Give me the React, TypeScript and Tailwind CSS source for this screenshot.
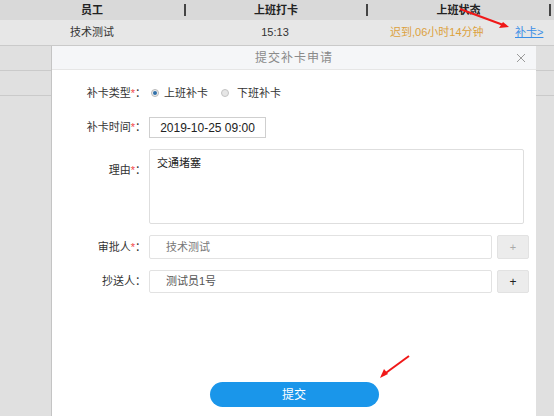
import React from 'react';

const font = { fontFamily: '"Liberation Sans", "Noto Sans CJK SC", sans-serif' };

function Label({ text, required }: { text: string; required?: boolean }) {
  return (
    <div className="w-[97px] shrink-0 pr-[3px] text-right text-[11px] text-[#333]">
      {text}
      {required && <span className="text-[#f04848]">*</span>}
      <span>：</span>
    </div>
  );
}

export default function App() {
  return (
    <div className="relative h-[416px] w-[554px] overflow-hidden bg-[#e0e0e0] text-[#333]" style={font}>
      {/* 背景の表 */}
      <div className="flex h-[20px] items-center bg-[#d9d9d9] text-[11px] font-bold text-[#222]">
        <div className="flex h-full w-[184px] items-center justify-center">员工</div>
        <div className="h-[12px] w-[2px] bg-[#444]"></div>
        <div className="flex h-full w-[180px] items-center justify-center">上班打卡</div>
        <div className="h-[12px] w-[2px] bg-[#444]"></div>
        <div className="flex h-full w-[181px] items-center justify-center">上班状态</div>
        <div className="h-[12px] w-[2px] bg-[#444]"></div>
      </div>
      <div className="flex h-[26px] items-center border-b border-[#cacaca] bg-[#e7e7e7] text-[11px]">
        <div className="w-[184px] text-center">技术测试</div>
        <div className="w-[182px] text-center">15:13</div>
        <div className="w-[24px]"></div>
        <div className="w-[125px] text-[#dca13c]">迟到,06小时14分钟</div>
        <div className="text-[#3a8ee6] underline">补卡&gt;</div>
      </div>
      <div className="h-[25px] border-b border-[#cacaca]"></div>
      <div className="h-[25px] border-b border-[#cacaca]"></div>

      {/* ダイアログ */}
      <div className="absolute left-[51px] top-[46px] flex h-[400px] w-[485px] flex-col border-l border-[#c4c4c4] bg-white">
        <div className="relative flex h-[24px] shrink-0 items-center justify-center border-b border-[#e6e6e6] bg-[#f5f6f8] text-[12px] tracking-[1px] text-[#8a8a8a]">
          提交补卡申请
          <svg className="absolute right-[10px] top-[7px]" width="10" height="10" viewBox="0 0 10 10">
            <path d="M1 1 L9 9 M9 1 L1 9" stroke="#9a9a9a" strokeWidth="1" fill="none" />
          </svg>
        </div>

        <div className="mt-[13px] flex h-[20px] items-center">
          <Label text="补卡类型" required />
          <span className="ml-[2px] flex h-[8px] w-[8px] items-center justify-center rounded-full border border-[#b8b8b8] bg-[#f0f0f0]">
            <span className="h-[4px] w-[4px] rounded-full bg-[#2f6fa8]"></span>
          </span>
          <span className="ml-[5px] text-[11px]">上班补卡</span>
          <span className="ml-[13px] h-[8px] w-[8px] rounded-full border border-[#c4c4c4] bg-[#e6e6e6]"></span>
          <span className="ml-[8px] text-[11px]">下班补卡</span>
        </div>

        <div className="mt-[14px] flex h-[21px] items-center">
          <Label text="补卡时间" required />
          <div className="flex h-[21px] w-[117px] items-center justify-center border border-[#cfcfcf] text-[12px] text-[#222]">
            2019-10-25 09:00
          </div>
        </div>

        <div className="mt-[11px] flex">
          <div className="pt-[13px]">
            <Label text="理由" required />
          </div>
          <div className="h-[75px] w-[375px] rounded-[2px] border border-[#dedede] px-[7px] pt-[5px] text-[11px] text-[#222]">
            交通堵塞
          </div>
        </div>

        <div className="mt-[11px] flex h-[24px] items-center">
          <Label text="审批人" required />
          <div className="flex h-[24px] w-[343px] items-center rounded-[2px] border border-[#e2e2e2] pl-[16px] text-[11px] text-[#777]">
            技术测试
          </div>
          <div className="ml-[5px] flex h-[24px] w-[32px] items-center justify-center rounded-[2px] border border-[#e2e2e2] bg-[#ececec] text-[11px] text-[#aaa]">
            +
          </div>
        </div>

        <div className="mt-[11px] flex h-[23px] items-center">
          <Label text="抄送人" />
          <div className="flex h-[23px] w-[343px] items-center rounded-[2px] border border-[#e2e2e2] pl-[16px] text-[11px] text-[#555]">
            测试员1号
          </div>
          <div className="ml-[5px] flex h-[23px] w-[32px] items-center justify-center rounded-[2px] border border-[#e2e2e2] bg-[#ececec] text-[12px] text-[#222]">
            +
          </div>
        </div>

        <div className="mx-auto mt-[89px] flex h-[25px] w-[169px] items-center justify-center rounded-full bg-[#1a96ea] text-[12px] text-white">
          提交
        </div>
      </div>

      {/* 赤い矢印 */}
      <svg className="absolute left-0 top-0" width="554" height="416" viewBox="0 0 554 416">
        <path d="M460 9 L506 26" stroke="#f01818" strokeWidth="2" fill="none" />
        <path d="M509 27 L499 28 L503 22 Z" fill="#f01818" />
        <path d="M409 356 L383 375" stroke="#f01818" strokeWidth="2" fill="none" />
        <path d="M380 378 L384 369 L388 374 Z" fill="#f01818" />
      </svg>
    </div>
  );
}
